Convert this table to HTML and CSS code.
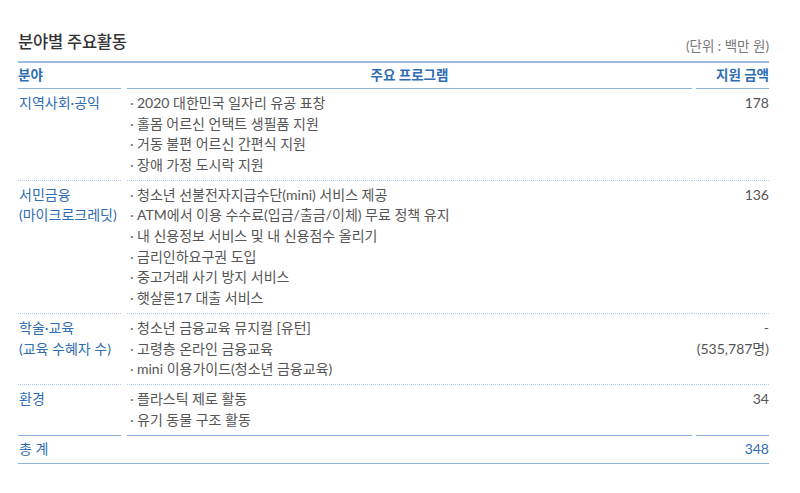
FILE: index.html
```html
<!DOCTYPE html>
<html lang="ko">
<head>
<meta charset="utf-8">
<title>분야별 주요활동</title>
<link rel="stylesheet" href="styles.css">
</head>
<body>
<div class="page">
  <div class="head">
    <h1 class="title">분야별 주요활동</h1>
    <span class="unit">(단위 : 백만 원)</span>
  </div>
  <div class="table">
    <div class="c1 th sep">분야</div>
    <div class="c2 th center sep">주요 프로그램</div>
    <div class="c3 th right sep gap">지원 금액</div>

    <div class="c1 cat dot">지역사회·공익</div>
    <div class="c2 dot">
      <ul class="list">
        <li>2020 대한민국 일자리 유공 표창</li>
        <li>홀몸 어르신 언택트 생필품 지원</li>
        <li>거동 불편 어르신 간편식 지원</li>
        <li>장애 가정 도시락 지원</li>
      </ul>
    </div>
    <div class="c3 amt dot">178</div>

    <div class="c1 cat dot">서민금융<br>(마이크로크레딧)</div>
    <div class="c2 dot">
      <ul class="list">
        <li>청소년 선불전자지급수단(mini) 서비스 제공</li>
        <li>ATM에서 이용 수수료(입금/출금/이체) 무료 정책 유지</li>
        <li>내 신용정보 서비스 및 내 신용점수 올리기</li>
        <li>금리인하요구권 도입</li>
        <li>중고거래 사기 방지 서비스</li>
        <li>햇살론17 대출 서비스</li>
      </ul>
    </div>
    <div class="c3 amt dot">136</div>

    <div class="c1 cat dot">학술·교육<br>(교육 수혜자 수)</div>
    <div class="c2 dot">
      <ul class="list">
        <li>청소년 금융교육 뮤지컬 [유턴]</li>
        <li>고령층 온라인 금융교육</li>
        <li>mini 이용가이드(청소년 금융교육)</li>
      </ul>
    </div>
    <div class="c3 amt dot">-<br>(535,787명)</div>

    <div class="c1 cat sep">환경</div>
    <div class="c2 sep">
      <ul class="list">
        <li>플라스틱 제로 활동</li>
        <li>유기 동물 구조 활동</li>
      </ul>
    </div>
    <div class="c3 amt sep gap">34</div>

    <div class="total">
      <span>총 계</span>
      <span>348</span>
    </div>
  </div>
</div>
</body>
</html>
```

FILE: styles.css
```css
* { box-sizing: border-box; }
html, body { margin: 0; padding: 0; background: #fff; }
body {
  font-family: "Lato", "Noto Sans CJK KR", "Noto Sans", sans-serif;
  color: #555;
}
.page {
  padding: 29px 31px 0 18px;
}
.head {
  display: flex;
  justify-content: space-between;
  align-items: flex-end;
  height: 32px;
}
.title {
  margin: 0;
  font-size: 16.5px;
  font-weight: 500;
  color: #333;
  line-height: 26px;
  letter-spacing: -0.2px;
  align-self: flex-start;
}
.unit {
  font-size: 13.5px;
  color: #777;
  line-height: 16px;
  margin-bottom: 7px;
}
.table {
  display: grid;
  grid-template-columns: 109px 1fr 77px;
  border-top: 2px solid #9dbde0;
  font-size: 14px;
  line-height: 20.6px;
}
.c1 { margin-right: 6px; }
.c3 { text-align: right; }
.c3.gap { margin-left: 4px; }
.th {
  color: #2f6db5;
  font-weight: 700;
  height: 26px;
  line-height: 24px;
  padding-top: 0;
  font-size: 13.5px;
}
.center { text-align: center; }
.right { text-align: right; }
.sep { border-bottom: 1.5px solid #8cb2dc; }
.dot { border-bottom: 1px dotted #b7cce6; }
.cat, .c2:not(.th), .amt {
  padding: 4px 0 4.5px;
}
.cat {
  color: #2f6db5;
  padding-left: 1px;
  font-size: 14px;
}
.amt { color: #555; }
.list {
  list-style: none;
  margin: 0;
  padding: 0 0 0 3px;
}
.list li::before {
  content: "·";
  display: inline-block;
  width: 7px;
  color: #777;
}
.total {
  grid-column: 1 / -1;
  display: flex;
  justify-content: space-between;
  height: 28px;
  align-items: center;
  color: #2f6db5;
  padding-left: 1px;
  border-bottom: 1.5px solid #8cb2dc;
  font-size: 14px;
}
```
